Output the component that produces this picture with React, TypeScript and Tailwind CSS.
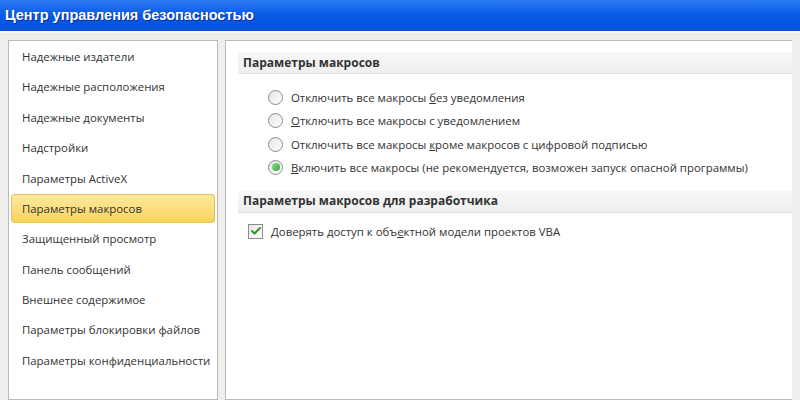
import { Check } from 'lucide-react';

const navItems = [
  'Надежные издатели',
  'Надежные расположения',
  'Надежные документы',
  'Надстройки',
  'Параметры ActiveX',
  'Параметры макросов',
  'Защищенный просмотр',
  'Панель сообщений',
  'Внешнее содержимое',
  'Параметры блокировки файлов',
  'Параметры конфиденциальности',
];

const radios = [
  { pre: 'Отключить все макросы ', u: 'б', post: 'ез уведомления' },
  { pre: '', u: 'О', post: 'тключить все макросы с уведомлением' },
  { pre: 'Отключить все макросы ', u: 'к', post: 'роме макросов с цифровой подписью' },
  { pre: '', u: 'В', post: 'ключить все макросы (не рекомендуется, возможен запуск опасной программы)' },
];

function Radio({ checked }: { checked: boolean }) {
  return (
    <span className="w-[15px] h-[15px] rounded-full border border-[#8c8c8c] bg-gradient-to-br from-[#e4e4e4] to-white flex items-center justify-center shrink-0">
      {checked && (
        <span className="w-[8px] h-[8px] rounded-full bg-gradient-to-br from-[#8ee08e] to-[#2ea72e]" />
      )}
    </span>
  );
}

export default function App() {
  return (
    <div className="w-[800px] h-[400px] overflow-hidden bg-[#f1efe6] flex flex-col text-[#333] font-['Open_Sans','Noto_Sans',sans-serif]">
      <div className="h-[31px] shrink-0 bg-gradient-to-b from-[#2a7bf2] via-[#0859e6] to-[#0452d9] flex items-center px-[5px]">
        <span className="text-white font-bold text-[14.5px] font-['Liberation_Sans',sans-serif] [text-shadow:1px_1px_0_#0a2f8a]">
          Центр управления безопасностью
        </span>
      </div>
      <div className="h-[2px] bg-[#fafafa]" />
      <div className="flex-1 flex gap-[7px] px-[8px] pt-[7px] bg-[#efeeeb]">
        <div className="w-[210px] bg-white border border-[#b9b9b9] flex flex-col pt-[1px] px-[2px]">
          {navItems.map((item, i) => (
            <div
              key={item}
              className={
                i === 5
                  ? 'h-[29px] mb-[1.4px] flex items-center pl-[10px] text-[11.4px] whitespace-nowrap rounded-[3px] border border-[#e0c062] bg-gradient-to-b from-[#fde99e] to-[#f9d458]'
                  : 'h-[29px] mb-[1.4px] flex items-center pl-[11px] text-[11.4px] whitespace-nowrap'
              }
            >
              {item}
            </div>
          ))}
        </div>
        <div className="flex-1 bg-white border border-[#b9b9b9] border-r-0 pt-[11px] pl-[12px]">
          <div className="h-[22px] bg-gradient-to-b from-[#f7f7f7] to-[#efefef] border-b border-[#e2e2e2] flex items-center pl-[5px] font-bold text-[12px] text-[#333]">
            Параметры макросов
          </div>
          <div className="flex flex-col pl-[30px] pt-[16px] gap-[8.3px]">
            {radios.map((r, i) => (
              <div key={i} className="flex items-center gap-[8px] h-[15px] text-[11.4px] whitespace-nowrap">
                <Radio checked={i === 3} />
                <span>
                  {r.pre}
                  <span className="underline">{r.u}</span>
                  {r.post}
                </span>
              </div>
            ))}
          </div>
          <div className="mt-[16px] h-[22px] bg-gradient-to-b from-[#f7f7f7] to-[#efefef] border-b border-[#e2e2e2] flex items-center pl-[5px] font-bold text-[12px] text-[#333]">
            Параметры макросов для разработчика
          </div>
          <div className="flex items-center gap-[8px] pl-[10px] pt-[10px] text-[11.4px]">
            <span className="w-[15px] h-[15px] border border-[#8c8c8c] bg-gradient-to-br from-[#e6e6e6] to-white flex items-center justify-center">
              <Check className="w-[12px] h-[12px] text-[#2c9a2c]" strokeWidth={4} />
            </span>
            <span>
              Доверять доступ к объ<span className="underline">е</span>ктной модели проектов VBA
            </span>
          </div>
        </div>
      </div>
    </div>
  );
}
